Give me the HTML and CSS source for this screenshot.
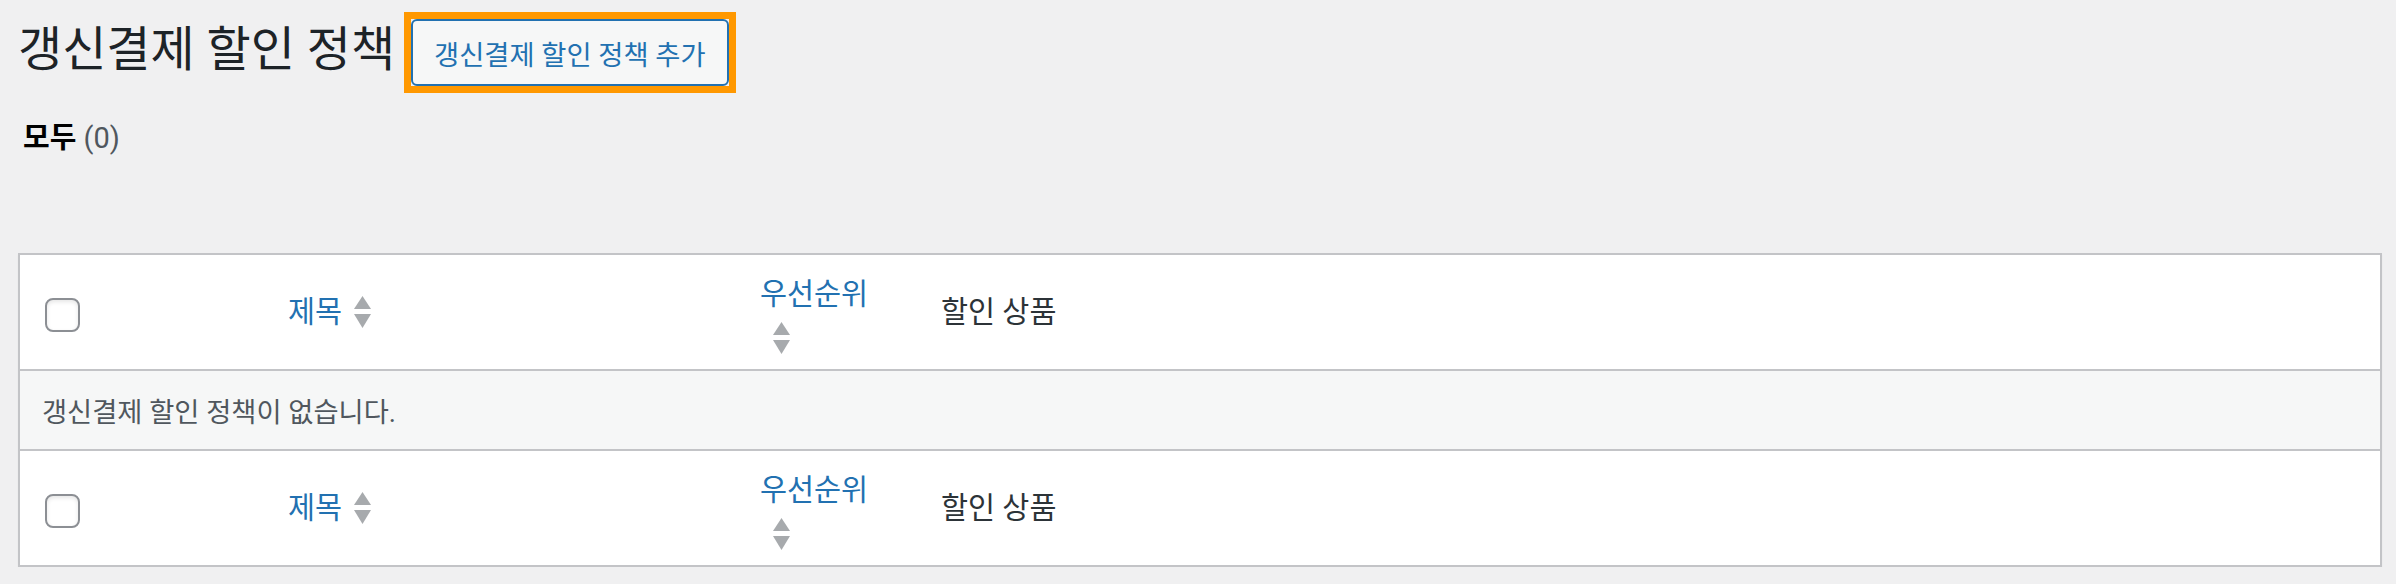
FILE: index.html
```html
<!DOCTYPE html>
<html lang="ko">
<head>
    <meta charset="UTF-8">
    <meta name="viewport" content="width=device-width, initial-scale=1.0">
    <title>갱신결제 할인 정책</title>
    <link rel="stylesheet" href="styles.css">
</head>
<body>

<div class="wrap">
    <div class="page-header">
        <h1 class="page-title">갱신결제 할인 정책</h1>
        <span class="highlight"><a href="#" class="title-action">갱신결제 할인 정책 추가</a></span>
    </div>

    <ul class="subsubsub">
        <li><a href="#" class="current">모두 <span class="count">(0)</span></a></li>
    </ul>

    <table class="list-table">
        <colgroup>
            <col class="col-cb">
            <col class="col-title">
            <col class="col-priority">
            <col>
        </colgroup>
        <thead>
            <tr>
                <td class="check-column"><input type="checkbox" class="cb"></td>
                <th class="sortable">
                    <a href="#">
                        <span>제목</span>
                        <svg class="sorting-indicators" width="17" height="32" viewBox="0 0 17 32"><polygon points="8.5,0 17,13 0,13"/><polygon points="0,18 17,18 8.5,32"/></svg>
                    </a>
                </th>
                <th class="sortable stacked">
                    <a href="#">
                        <span>우선순위</span>
                        <svg class="sorting-indicators" width="17" height="32" viewBox="0 0 17 32"><polygon points="8.5,0 17,13 0,13"/><polygon points="0,18 17,18 8.5,32"/></svg>
                    </a>
                </th>
                <th class="plain">할인 상품</th>
            </tr>
        </thead>
        <tbody>
            <tr class="no-items">
                <td colspan="4">갱신결제 할인 정책이 없습니다.</td>
            </tr>
        </tbody>
        <tfoot>
            <tr>
                <td class="check-column"><input type="checkbox" class="cb"></td>
                <th class="sortable">
                    <a href="#">
                        <span>제목</span>
                        <svg class="sorting-indicators" width="17" height="32" viewBox="0 0 17 32"><polygon points="8.5,0 17,13 0,13"/><polygon points="0,18 17,18 8.5,32"/></svg>
                    </a>
                </th>
                <th class="sortable stacked">
                    <a href="#">
                        <span>우선순위</span>
                        <svg class="sorting-indicators" width="17" height="32" viewBox="0 0 17 32"><polygon points="8.5,0 17,13 0,13"/><polygon points="0,18 17,18 8.5,32"/></svg>
                    </a>
                </th>
                <th class="plain">할인 상품</th>
            </tr>
        </tfoot>
    </table>
</div>

</body>
</html>
```

FILE: styles.css
```css
body {
    margin: 0;
    background: #f0f0f1;
    color: #3c434a;
    font-family: Roboto, "Noto Sans CJK KR", sans-serif;
    font-size: 27.3px;
}
a {
    text-decoration: none;
}
.wrap {
    padding: 17px 14px 0 18px;
}
.page-header {
    display: flex;
    align-items: flex-start;
}
.page-title {
    margin: 0;
    font-size: 48px;
    font-weight: 400;
    line-height: 65px;
    color: #1d2327;
}
.highlight {
    display: flex;
    margin: -5px 0 0 9px;
    border: 7px solid #ff9800;
}
.title-action {
    display: flex;
    align-items: center;
    box-sizing: border-box;
    height: 67px;
    padding: 0 21px;
    border: 2px solid #2271b1;
    border-radius: 6px;
    background: #f6f7f7;
    color: #2271b1;
    font-size: 27.3px;
}
.subsubsub {
    list-style: none;
    margin: 26px 0 0;
    padding: 0 0 0 5px;
    font-size: 29px;
    line-height: 39px;
}
.subsubsub .current {
    color: #000;
    font-weight: 600;
}
.subsubsub .count {
    color: #50575e;
    font-weight: 400;
}
.list-table {
    width: 100%;
    margin-top: 95px;
    table-layout: fixed;
    border-spacing: 0;
    border: 2px solid #c3c4c7;
    background: #fff;
    box-shadow: 0 2px 2px rgba(0, 0, 0, 0.04);
}
.col-cb {
    width: 252px;
}
.col-title {
    width: 473px;
}
.col-priority {
    width: 177px;
}
.list-table th, .list-table td {
    box-sizing: border-box;
    padding: 0;
    text-align: left;
    vertical-align: middle;
    font-weight: 400;
}
.list-table thead th, .list-table thead td {
    height: 116px;
    border-bottom: 2px solid #c3c4c7;
}
.list-table tfoot th, .list-table tfoot td {
    height: 116px;
    border-top: 2px solid #c3c4c7;
}
.check-column {
    padding-left: 25px !important;
}
.cb {
    appearance: none;
    display: block;
    width: 35px;
    height: 34px;
    margin: 6px 0 0;
    border: 2px solid #8c8f94;
    border-radius: 8px;
    background: #fff;
    box-shadow: inset 0 2px 4px rgba(0, 0, 0, 0.1);
}
.sortable a {
    display: flex;
    align-items: center;
    padding-left: 16px;
    color: #2271b1;
    font-size: 29.4px;
    line-height: 38px;
}
.sorting-indicators {
    display: block;
    margin-left: 12px;
    fill: #a7aaad;
}
.stacked a {
    display: block;
    padding-left: 15px;
    padding-top: 5px;
}
.stacked span {
    display: block;
}
.stacked .sorting-indicators {
    margin: 9px 0 0 13px;
}
.plain {
    padding-left: 19px !important;
    color: #2c3338;
    font-size: 29.4px;
    line-height: 38px;
}
.no-items td {
    height: 78px;
    padding: 0 22px !important;
    background: #f6f7f7;
    color: #50575e;
    font-size: 27.3px;
}
```
